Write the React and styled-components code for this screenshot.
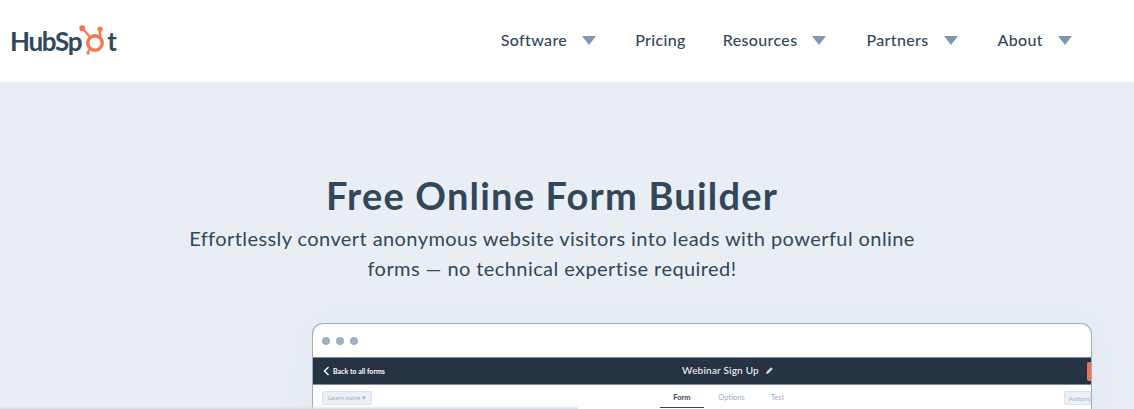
import React from "react";
import styled, { createGlobalStyle } from "styled-components";

const Global = createGlobalStyle`
  html, body { margin: 0; padding: 0; height: 409px; overflow: hidden; background: #e9eef5; }
  body { font-family: Lato, "Open Sans", "Liberation Sans", sans-serif; color: #33475b; }
  #root { height: 409px; overflow: hidden; position: relative; }
`;

const Header = styled.header`
  height: 82px;
  background: #fff;
  display: flex;
  align-items: center;
  justify-content: space-between;
  padding: 0 62px 0 10px;
`;

const Logo = styled.div`
  display: flex;
  align-items: baseline;
  font-family: Lato, sans-serif;
  font-weight: 700;
  font-size: 26px;
  letter-spacing: -1.3px;
  line-height: 1;
  color: #33475b;
`;

const Sprocket = styled.svg`
  width: 30px;
  height: 34px;
  margin: -4px -2px -4px -2px;
  align-self: flex-start;
  flex: none;
`;

const Nav = styled.nav`
  display: flex;
  align-items: center;
`;

const NavItem = styled.a`
  display: flex;
  align-items: center;
  font-size: 16px;
  font-weight: 500;
  letter-spacing: 0.35px;
  color: #33475b;
  margin-left: ${(p) => p.$gap}px;
  margin-top: -3px;
`;

const Caret = styled.span`
  width: 0;
  height: 0;
  margin-left: 15px;
  margin-top: 2px;
  border-left: 7px solid transparent;
  border-right: 7px solid transparent;
  border-top: 9px solid #7c98b6;
`;

const Hero = styled.main`
  height: 327px;
  display: flex;
  flex-direction: column;
  align-items: center;
  padding-top: 89px;
  box-sizing: border-box;
  background: #e9eef5;
`;

const Title = styled.h1`
  margin: 0 0 0 -30px;
  font-size: 38px;
  line-height: 48px;
  font-weight: 700;
  letter-spacing: 1.2px;
  color: #33475b;
`;

const Subtitle = styled.p`
  margin: 4px 0 0 -30px;
  width: 760px;
  text-align: center;
  font-size: 20px;
  line-height: 30px;
  font-weight: 400;
  letter-spacing: 0.42px;
  color: #33475b;
`;

const Browser = styled.section`
  margin: 40px 0 0 270px;
  width: 780px;
  flex: none;
  height: 120px;
  box-sizing: border-box;
  background: #fff;
  border: 1px solid #99acc2;
  border-bottom: 0;
  border-radius: 11px 11px 0 0;
  overflow: hidden;
  box-shadow: 0 0 40px rgba(203, 214, 226, 0.25);
`;

const Chrome = styled.div`
  height: 33px;
  display: flex;
  align-items: center;
  gap: 6px;
  padding: 1px 0 0 9px;
  box-sizing: border-box;
`;

const Dot = styled.span`
  width: 8px;
  height: 8px;
  border-radius: 50%;
  background: #9fb0c4;
`;

const AppBar = styled.div`
  height: 28px;
  background: #253342;
  display: grid;
  grid-template-columns: 1fr auto 1fr;
  align-items: center;
  border-top: 1px solid #7c8b9c;
  border-bottom: 1px solid #7c8b9c;
  box-sizing: border-box;
  color: #fff;
`;

const Back = styled.div`
  display: flex;
  align-items: center;
  gap: 3px;
  padding-left: 10px;
  font-size: 7px;
  font-weight: 700;
`;

const FormName = styled.div`
  display: flex;
  align-items: center;
  gap: 6px;
  font-size: 10px;
  font-weight: 500;
  letter-spacing: 0.2px;
  margin: -2px 0 0 52px;
  color: #eef2f6;
`;

const BarEnd = styled.div`
  justify-self: end;
  width: 4px;
  height: 19px;
  background: #ec7357;
  border-radius: 2px 0 0 2px;
`;

const TabRow = styled.div`
  height: 24px;
  display: grid;
  grid-template-columns: 1fr auto 1fr;
  align-items: start;
  padding-left: 9px;
`;

const SmallButton = styled.div`
  justify-self: ${(p) => (p.$end ? "end" : "start")};
  height: 12px;
  margin-top: 6px;
  padding: ${(p) => (p.$end ? "0 0 0 3px" : "0 5px")};
  display: flex;
  align-items: center;
  gap: 2px;
  font-size: 6.5px;
  color: #9fb0c4;
  background: #eaf0f6;
  border: 1px solid #dbe3ec;
  border-radius: 2px;
`;

const Tabs = styled.div`
  display: flex;
  margin-left: 43px;
`;

const Tab = styled.div`
  width: ${(p) => p.$w}px;
  height: 23px;
  padding-top: 8px;
  box-sizing: border-box;
  text-align: center;
  font-size: 7.5px;
  color: ${(p) => (p.$active ? "#33475b" : "#99acc2")};
  font-weight: ${(p) => (p.$active ? 700 : 400)};
  border-bottom: ${(p) => (p.$active ? "1px solid #33475b" : "0")};
`;

const Fade = styled.div`
  position: absolute;
  left: 0;
  bottom: 0;
  width: 578px;
  height: 3px;
  background: linear-gradient(to bottom, rgba(210, 216, 222, 0), #d9dee3);
  pointer-events: none;
`;

export default function App() {
  return (
    <>
      <Global />
      <Header>
        <Logo>
          HubSp
          <Sprocket viewBox="0 0 30 34" aria-hidden="true">
            <g fill="none" stroke="#f8764e" strokeLinecap="round">
              <circle cx="16" cy="19" r="7.2" strokeWidth="3.4" />
              <path d="M21 6v6" strokeWidth="2.4" />
              <path d="M4 5l7 8" strokeWidth="2.2" />
              <path d="M11 25l-2 3" strokeWidth="1.8" />
            </g>
            <circle cx="21" cy="5" r="2.6" fill="#f8764e" />
            <circle cx="3.2" cy="4.2" r="3" fill="#f8764e" />
            <circle cx="9" cy="29" r="1.7" fill="#f8764e" />
          </Sprocket>
          t
        </Logo>
        <Nav>
          <NavItem $gap={0}>Software<Caret /></NavItem>
          <NavItem $gap={39}>Pricing</NavItem>
          <NavItem $gap={37}>Resources<Caret /></NavItem>
          <NavItem $gap={40}>Partners<Caret /></NavItem>
          <NavItem $gap={40}>About<Caret /></NavItem>
        </Nav>
      </Header>
      <Hero>
        <Title>Free Online Form Builder</Title>
        <Subtitle>
          Effortlessly convert anonymous website visitors into leads with powerful online forms — no technical expertise required!
        </Subtitle>
        <Browser>
          <Chrome><Dot /><Dot /><Dot /></Chrome>
          <AppBar>
            <Back>
              <svg width="7" height="10" viewBox="0 0 7 10" aria-hidden="true">
                <path d="M5.5 1L1.5 5l4 4" fill="none" stroke="#fff" strokeWidth="1.4" />
              </svg>
              Back to all forms
            </Back>
            <FormName>
              Webinar Sign Up
              <svg width="9" height="9" viewBox="0 0 9 9" aria-hidden="true">
                <path d="M1 8l.5-2.3L6 1.2 7.8 3 3.3 7.5z" fill="#cbd6e2" />
              </svg>
            </FormName>
            <BarEnd />
          </AppBar>
          <TabRow>
            <SmallButton>Learn more ▾</SmallButton>
            <Tabs>
              <Tab $w={44} $active>Form</Tab>
              <Tab $w={55}>Options</Tab>
              <Tab $w={37}>Test</Tab>
            </Tabs>
            <SmallButton $end>Actions</SmallButton>
          </TabRow>
        </Browser>
      </Hero>
      <Fade />
    </>
  );
}
